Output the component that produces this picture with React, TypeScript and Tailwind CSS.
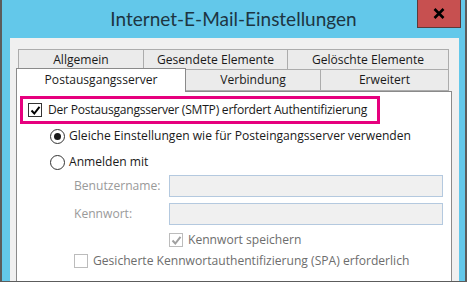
import React from "react";

function Check({ color = "#000" }: { color?: string }) {
  return (
    <svg width="11" height="11" viewBox="0 0 11 11">
      <path d="M1.5 5.5 L4.3 8.5 L9.5 1.8" fill="none" stroke={color} strokeWidth="2" />
    </svg>
  );
}

export default function App() {
  const tabRow1 = [
    { label: "Allgemein", w: "w-[126px]" },
    { label: "Gesendete Elemente", w: "w-[144px]" },
    { label: "Gelöschte Elemente", w: "w-[161px]" },
  ];

  return (
    <div
      className="w-[467px] h-[282px] flex flex-col bg-[#63c8ea] border-x-2 border-b border-[#5c5c5c] overflow-hidden text-[12.1px] leading-[16px] text-[#1a1a1a]"
      style={{ fontFamily: "'Open Sans', 'Noto Sans', sans-serif" }}
    >
      {/* title bar */}
      <div className="relative h-[38px] flex items-center justify-center shrink-0">
        <span className="text-[19px] leading-[24px] text-[#1d3542] -mt-[1px]" style={{ fontFamily: "Lato, sans-serif" }}>
          Internet-E-Mail-Einstellungen
        </span>
        <div className="absolute top-0 right-[4px] w-[44px] h-[28px] bg-[#c75050] border border-[#5a3b3b] border-t-0 flex items-center justify-center">
          <svg width="12" height="11" viewBox="0 0 12 11">
            <path d="M1.5 1 L10.5 10 M10.5 1 L1.5 10" stroke="#000" strokeWidth="2.6" />
          </svg>
        </div>
      </div>

      {/* gray panel */}
      <div className="flex-1 ml-[8px] mr-[6px] bg-[#f0f0f0] pl-[6px] pr-[7px] pt-[11px] flex flex-col">
        {/* tabs */}
        <div className="flex pl-[2px]">
          {tabRow1.map((t, i) => (
            <div
              key={t.label}
              className={`${t.w} h-[21px] bg-[#ebebeb] border border-[#acacac] ${i > 0 ? "border-l-0" : ""} flex items-center justify-center`}
            >
              {t.label}
            </div>
          ))}
        </div>
        <div className="flex -mt-[1px] pl-[2px]">
          <div className="relative z-10 -ml-[2px] -mt-[1px] w-[170px] h-[24px] bg-white border border-b-0 border-[#8a8a8a] flex items-center justify-center pb-[1px]">
            Postausgangsserver
          </div>
          <div className="w-[135px] h-[22px] bg-[#ebebeb] border border-l-0 border-[#acacac] flex items-center justify-center">
            Verbindung
          </div>
          <div className="w-[128px] h-[22px] bg-[#ebebeb] border border-l-0 border-[#acacac] flex items-center justify-center">
            Erweitert
          </div>
        </div>

        {/* content */}
        <div className="flex-1 -mt-[1px] bg-white border border-b-0 border-[#8a8a8a] pl-[3px] pt-[4px]">
          <div className="w-[360px] h-[28px] border-[3px] border-[#e6007e] flex items-center pl-[5px] gap-[6px]">
            <div className="w-[14px] h-[14px] border border-[#333] bg-white flex items-center justify-center">
              <Check />
            </div>
            <span className="whitespace-nowrap tracking-[-0.25px]">Der Postausgangsserver (SMTP) erfordert Authentifizierung</span>
          </div>

          <div className="flex flex-col pl-[30px] mt-[5px] gap-[12px]">
            <div className="flex items-center gap-[4px] h-[14px]">
              <div className="w-[15px] h-[15px] rounded-full border border-[#333] flex items-center justify-center">
                <div className="w-[7px] h-[7px] rounded-full bg-[#1a1a1a]" />
              </div>
              <span className="whitespace-nowrap">Gleiche Einstellungen wie für Posteingangsserver verwenden</span>
            </div>
            <div className="flex items-center gap-[4px] h-[14px]">
              <div className="w-[15px] h-[15px] rounded-full border border-[#333]" />
              <span>Anmelden mit</span>
            </div>
          </div>

          <div className="flex flex-col pl-[54px] mt-[6px] gap-[6px] text-[#9a9a9a]">
            <div className="flex items-center">
              <span className="w-[95px]">Benutzername:</span>
              <div className="w-[274px] h-[22px] bg-[#f0f0f0] border border-[#b4c9df]" />
            </div>
            <div className="flex items-center">
              <span className="w-[95px]">Kennwort:</span>
              <div className="w-[274px] h-[22px] bg-[#f0f0f0] border border-[#b4c9df]" />
            </div>
          </div>

          <div className="flex items-center gap-[5px] pl-[149px] mt-[7px] text-[#6d6d6d]">
            <div className="w-[14px] h-[14px] border border-[#bcbcbc] flex items-center justify-center">
              <Check color="#a0a0a0" />
            </div>
            <span>Kennwort speichern</span>
          </div>

          <div className="flex items-center gap-[5px] pl-[54px] mt-[5px] text-[#6d6d6d]">
            <div className="w-[14px] h-[14px] border border-[#bcbcbc]" />
            <span className="whitespace-nowrap">Gesicherte Kennwortauthentifizierung (SPA) erforderlich</span>
          </div>
        </div>
      </div>
    </div>
  );
}
